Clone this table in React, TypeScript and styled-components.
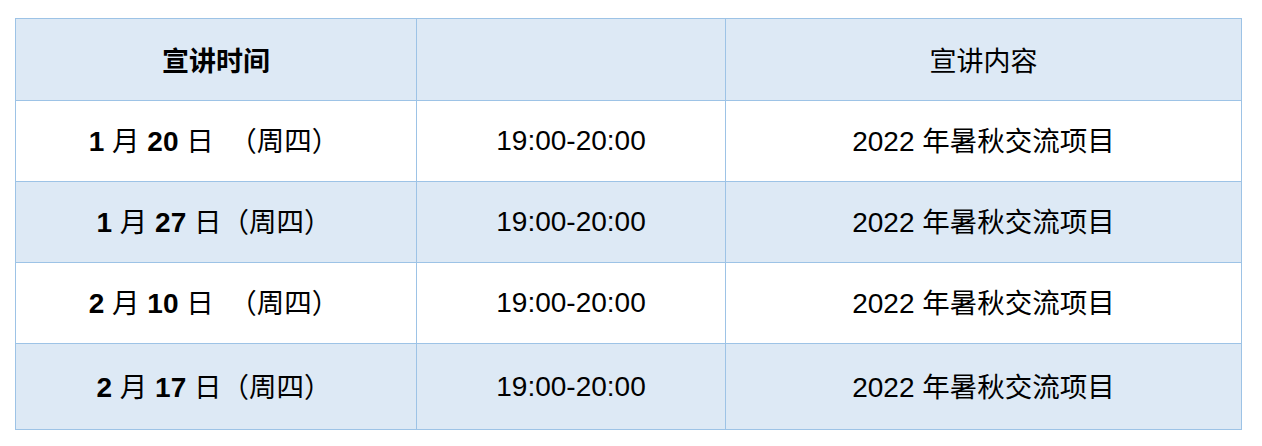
import React from "react";
import styled, { createGlobalStyle } from "styled-components";

const Global = createGlobalStyle`
  html, body { margin: 0; padding: 0; background: #ffffff; }
  body { font-family: "Liberation Sans", "Noto Sans CJK SC", sans-serif; color: #000; }
`;

const Page = styled.div`
  padding: 18px 0 0 15px;
`;

const Grid = styled.div`
  display: grid;
  width: 1227px;
  box-sizing: border-box;
  grid-template-columns: 400px 308px 515px;
  grid-template-rows: 81px 80px 80px 80px 85px;
  gap: 1px;
  padding: 1px;
  background: #9dc3e6;
`;

const Cell = styled.div<{ $shade: boolean; $padRight?: number }>`
  display: flex;
  align-items: center;
  justify-content: center;
  box-sizing: border-box;
  padding-right: ${(p) => p.$padRight ?? 0}px;
  background: ${(p) => (p.$shade ? "#dde9f5" : "#ffffff")};
  font-family: "Liberation Sans", sans-serif;
  font-size: 28px;
  line-height: 1;
`;

const Line = styled.span`
  display: inline-block;
  white-space: pre;
`;

const HeadText = styled.span<{ $bold?: boolean }>`
  font-family: "Noto Sans CJK SC", sans-serif;
  font-weight: ${(p) => (p.$bold ? 700 : 400)};
  font-size: 27px;
`;

const Num = styled.span<{ $bold?: boolean }>`
  font-family: "Liberation Sans", sans-serif;
  font-weight: ${(p) => (p.$bold ? 700 : 400)};
`;

const Han = styled.span`
  font-family: "Noto Sans CJK SC", sans-serif;
  font-weight: 400;
  font-size: 27.5px;
`;

type Row = { m: string; d: string; sep: string };

const rows: Row[] = [
  { m: "1", d: "20", sep: "  " },
  { m: "1", d: "27", sep: "" },
  { m: "2", d: "10", sep: "  " },
  { m: "2", d: "17", sep: "" },
];

export default function App() {
  return (
    <>
      <Global />
      <Page>
        <Grid>
          <Cell $shade>
            <HeadText $bold>宣讲时间</HeadText>
          </Cell>
          <Cell $shade />
          <Cell $shade>
            <HeadText>宣讲内容</HeadText>
          </Cell>
          {rows.map((r, i) => {
            const shade = i % 2 === 1;
            return (
              <React.Fragment key={i}>
                <Cell $shade={shade} $padRight={4}>
                  <Line>
                    <Num $bold>{r.m}</Num>
                    {" "}
                    <Han>月</Han>
                    {" "}
                    <Num $bold>{r.d}</Num>
                    {" "}
                    <Han>日</Han>
                    {r.sep}
                    <Han>（周四）</Han>
                  </Line>
                </Cell>
                <Cell $shade={shade}>
                  <Line>
                    <Num>19:00-20:00</Num>
                  </Line>
                </Cell>
                <Cell $shade={shade}>
                  <Line>
                    <Num>2022</Num>
                    {" "}
                    <Han>年暑秋交流项目</Han>
                  </Line>
                </Cell>
              </React.Fragment>
            );
          })}
        </Grid>
      </Page>
    </>
  );
}
